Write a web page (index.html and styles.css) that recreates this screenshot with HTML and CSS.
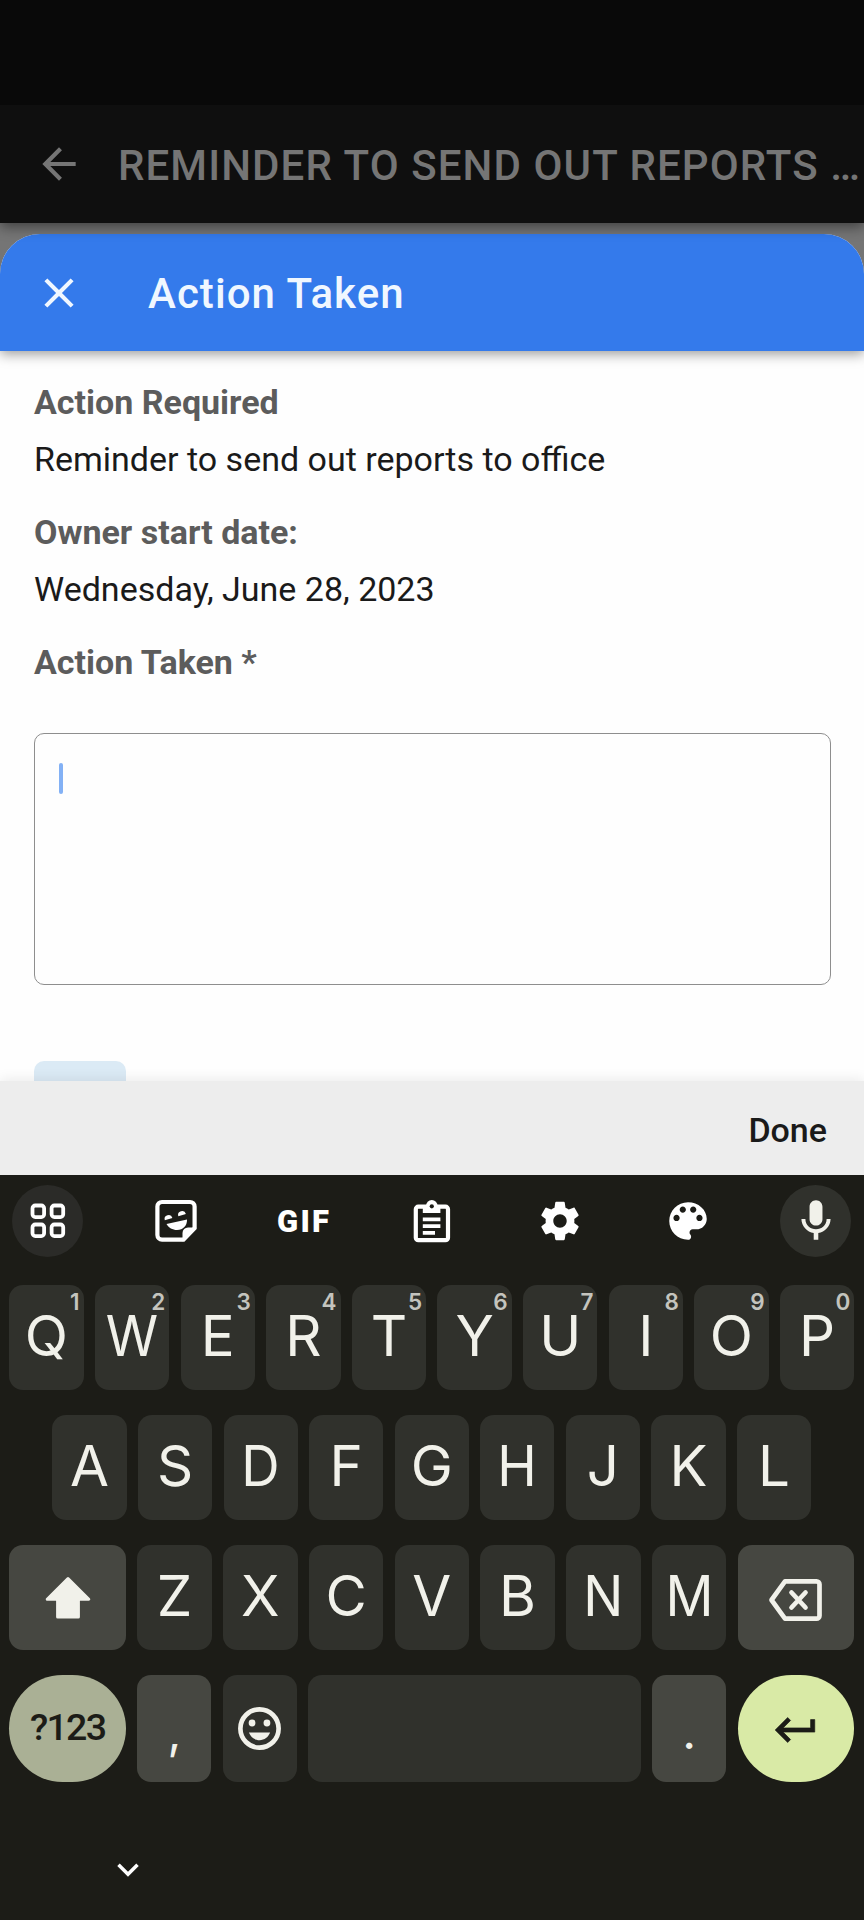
FILE: index.html
```html
<!DOCTYPE html>
<html lang="en">
<head>
<meta charset="utf-8">
<title>Action Taken</title>
<link rel="stylesheet" href="styles.css">
</head>
<body>
<div class="screen">
  <div class="statusbar"></div>
  <header class="appbar">
    <svg class="ic" viewBox="0 0 24 24"><path d="M20 11H7.83l5.59-5.59L12 4l-8 8 8 8 1.41-1.41L7.83 13H20v-2z"/></svg>
    <div class="appbar-title">REMINDER TO SEND OUT REPORTS …</div>
  </header>
  <div class="backdrop">
    <section class="sheet">
      <header class="sheet-header">
        <svg class="ic" viewBox="0 0 24 24"><path d="M19 6.41L17.59 5 12 10.59 6.41 5 5 6.41 10.59 12 5 17.59 6.41 19 12 13.41 17.59 19 19 17.59 13.41 12z"/></svg>
        <h1 class="sheet-title">Action Taken</h1>
      </header>
      <div class="sheet-body">
        <div class="label">Action Required</div>
        <div class="value">Reminder to send out reports to office</div>
        <div class="label">Owner start date:</div>
        <div class="value">Wednesday, June 28, 2023</div>
        <div class="label">Action Taken *</div>
        <div class="textbox"><span class="caret"></span></div>
        <div class="chip"></div>
      </div>
    </section>
  </div>
  <div class="accessory"><span class="done">Done</span></div>
  <div class="keyboard">
    <div class="tools">
      <div class="tool round"><svg width="36" height="36" viewBox="0 0 36 36" fill="none" stroke="#fff" stroke-width="3.8"><rect x="2.5" y="2.5" width="11.6" height="11.6" rx="2.8"/><rect x="21.6" y="2.5" width="11.6" height="11.6" rx="2.8"/><rect x="2.5" y="21.5" width="11.6" height="11.6" rx="2.8"/><rect x="21.6" y="21.5" width="11.6" height="11.6" rx="2.8"/></svg></div>
      <div class="tool"><svg width="44" height="44" viewBox="0 0 44 44"><path d="M8 3h28a4.600 4.600 0 0 1 4.600 4.600v21.500L29.500 40.600H8a4.600 4.600 0 0 1-4.600-4.600V7.600A4.600 4.600 0 0 1 8 3z" fill="none" stroke="#fff" stroke-width="4.200"/><path d="M42.500 28.500h-8.500a5.500 5.500 0 0 0-5.500 5.500v8.500z" fill="#fff"/><path d="M10.800 21.300a3.900 3.900 0 1 1 7.600-2.300z M24.300 17.300a3.900 3.900 0 1 1 7.600-2.300z" fill="#fff"/><path d="M12.500 25 33 20.500c.3 6-4 10.500-9.900 10.500-4.600 0-8.600-2.200-10.600-6z" fill="#fff"/></svg></div>
      <div class="tool gif">GIF</div>
      <div class="tool"><svg width="44" height="44" viewBox="0 0 44 44"><rect x="5.800" y="7.700" width="32.200" height="33.500" rx="2.500" fill="none" stroke="#fff" stroke-width="4.200"/><circle cx="21.800" cy="6.800" r="5.800" fill="#fff"/><rect x="12.800" y="6" width="17.600" height="8" fill="#fff"/><circle cx="21.800" cy="7.300" r="2.100" fill="#1c1c17"/><path d="M12.800 20.300h17.600M12.800 27.100h17.600M12.800 33.900h12.200" stroke="#fff" stroke-width="3.700"/></svg></div>
      <div class="tool"><svg width="46" height="46" viewBox="0 0 24 24" fill="#fff"><path d="M19.430 12.980c.04-.32.07-.64.07-.98s-.03-.66-.07-.98l2.110-1.650c.19-.15.24-.42.12-.64l-2-3.460c-.12-.22-.39-.3-.61-.22l-2.490 1c-.52-.4-1.080-.73-1.690-.98l-.38-2.650C14.460 2.180 14.250 2 14 2h-4c-.25 0-.46.18-.49.42l-.38 2.650c-.61.25-1.170.59-1.690.98l-2.490-1c-.23-.09-.49 0-.61.22l-2 3.460c-.13.22-.07.49.12.64l2.110 1.650c-.04.32-.07.65-.07.98s.03.66.07.98l-2.110 1.650c-.19.15-.24.42-.12.64l2 3.460c.12.22.39.3.61.22l2.490-1c.52.4 1.080.73 1.690.98l.38 2.650c.03.24.24.42.49.42h4c.25 0 .46-.18.49-.42l.38-2.650c.61-.25 1.170-.59 1.690-.98l2.490 1c.23.09.49 0 .61-.22l2-3.460c.12-.22.07-.49-.12-.64l-2.110-1.650zM12 15.500c-1.930 0-3.500-1.570-3.500-3.500s1.570-3.500 3.500-3.500 3.500 1.570 3.500 3.500-1.570 3.500-3.500 3.500z"/></svg></div>
      <div class="tool"><svg width="50" height="50" viewBox="0 0 24 24" fill="#fff"><path d="M12 3c-4.970 0-9 4.030-9 9s4.030 9 9 9c.83 0 1.500-.67 1.500-1.500 0-.39-.15-.74-.39-1.010-.23-.26-.38-.61-.38-.99 0-.83.67-1.500 1.500-1.500H16c2.760 0 5-2.240 5-5 0-4.420-4.030-8-9-8zm-5.500 9c-.83 0-1.500-.67-1.500-1.500S5.670 9 6.500 9 8 9.670 8 10.500 7.330 12 6.500 12zm3-4C8.670 8 8 7.330 8 6.500S8.670 5 9.500 5s1.500.67 1.500 1.500S10.330 8 9.500 8zm5 0c-.83 0-1.500-.67-1.500-1.500S13.670 5 14.500 5s1.500.67 1.500 1.500S15.330 8 14.500 8zm3 4c-.83 0-1.500-.67-1.500-1.500S16.670 9 17.500 9s1.500.67 1.500 1.500-.67 1.500-1.500 1.500z"/></svg></div>
      <div class="tool round mic"><svg width="50" height="50" viewBox="0 0 24 24" fill="#f1f1ea"><path d="M12 14.200c1.760 0 3.100-1.400 3.100-3.100V5.100c0-1.700-1.400-3.100-3.100-3.100S8.900 3.400 8.900 5.100v6c0 1.700 1.400 3.100 3.100 3.100zm5.100-3.200c0 3-2.440 4.900-5.100 4.900S6.900 14 6.900 11H5c0 3.410 2.720 6.230 5.900 6.720V21h2.200v-3.280c3.180-.48 5.900-3.300 5.900-6.720h-1.900z"/></svg></div>
    </div>
    <div class="keys">
      <div class="row">
        <div class="key">Q<i>1</i></div><div class="key"><b>W</b><i>2</i></div><div class="key">E<i>3</i></div><div class="key">R<i>4</i></div><div class="key">T<i>5</i></div><div class="key">Y<i>6</i></div><div class="key">U<i>7</i></div><div class="key">I<i>8</i></div><div class="key">O<i>9</i></div><div class="key">P<i>0</i></div>
      </div>
      <div class="row inset">
        <div class="key">A</div><div class="key">S</div><div class="key"><b>D</b></div><div class="key">F</div><div class="key">G</div><div class="key"><b>H</b></div><div class="key">J</div><div class="key">K</div><div class="key">L</div>
      </div>
      <div class="row">
        <div class="key wide alt shift"><svg width="48" height="48" viewBox="0 0 48 48" fill="#f1f1ea" stroke="#f1f1ea" stroke-width="3" stroke-linejoin="round"><path d="M24 4.500 44.800 25.300H34.400V43H13.600V25.300H3.200z"/></svg></div>
        <div class="key">Z</div><div class="key">X</div><div class="key">C</div><div class="key">V</div><div class="key">B</div><div class="key"><b>N</b></div><div class="key"><b>M</b></div>
        <div class="key wide alt"><svg width="56" height="48" viewBox="0 0 56 48" fill="none" stroke="#f1f1ea" stroke-width="4.700" stroke-linejoin="round"><path d="M17 5.300h31.500a3 3 0 0 1 3 3v31.400a3 3 0 0 1-3 3H17L3.500 24z"/><path d="M23.500 16.500l14 15M37.500 16.500l-14 15" stroke-linecap="round"/></svg></div>
      </div>
      <div class="row last">
        <div class="key wide sym"><span>?123</span></div>
        <div class="key alt punct"><span>,</span></div>
        <div class="key"><svg width="51" height="51" viewBox="0 0 24 24"><circle cx="12" cy="12" r="9" fill="none" stroke="#f1f1ea" stroke-width="2.200"/><circle cx="8.500" cy="9.400" r="1.600" fill="#f1f1ea"/><circle cx="15.500" cy="9.400" r="1.600" fill="#f1f1ea"/><path d="M7 13.900h10c-.8 2.100-2.700 3.600-5 3.600s-4.200-1.500-5-3.600z" fill="#f1f1ea"/></svg></div>
        <div class="key space"></div>
        <div class="key alt punct"><span>.</span></div>
        <div class="key wide enter"><svg width="50" height="50" viewBox="0 0 24 24" fill="#1c1c17" stroke="#1c1c17" stroke-width=".3"><path d="M19 7v4H5.830l3.580-3.590L8 6l-6 6 6 6 1.410-1.410L5.830 13H21V7h-2z"/></svg></div>
      </div>
    </div>
    <div class="navbar"><svg width="24" height="16" viewBox="0 0 24 16" fill="none" stroke="#fff" stroke-width="3.500"><path d="M2.500 2.800 12 12.300 21.500 2.800"/></svg></div>
  </div>
</div>
</body>
</html>
```
FILE: styles.css
```css
* { box-sizing: border-box; }
body { margin: 0; background: #1c1c17; font-family: Roboto, sans-serif; }
svg { display: block; flex: none; }
.screen { width: 864px; height: 1920px; display: flex; flex-direction: column; overflow: hidden; }
.statusbar { height: 105px; background: #090909; flex: none; position: relative; z-index: 2; }
.appbar { height: 118px; flex: none; background: #0f0f0f; display: flex; align-items: center; padding-left: 34px; color: #757575; box-shadow: 0 4px 12px rgba(0,0,0,.45); z-index: 1; }
.ic { width: 50px; height: 50px; fill: currentColor; }
.appbar-title { margin-left: 34px; font-size: 42px; font-weight: 500; letter-spacing: 1.100px; white-space: nowrap; line-height: 50px; padding-top: 4px; }
.backdrop { height: 858px; flex: none; background: #757575; padding-top: 11px; overflow: hidden; }
.sheet { height: 847px; border-radius: 40px 40px 0 0; background: #fefefe; overflow: hidden; }
.sheet-header { height: 117px; background: #347aeb; display: flex; align-items: center; padding-left: 34px; color: #f0f7ff; box-shadow: 0 3px 12px rgba(0,0,0,.4); }
.sheet-title { margin: 3px 0 0 64px; font-size: 42px; font-weight: 500; letter-spacing: 1.050px; line-height: 50px; }
.sheet-body { padding: 31px 34px 0; display: flex; flex-direction: column; }
.label, .value { font-size: 34px; line-height: 40px; white-space: nowrap; }
.label { font-weight: 700; color: #5c5c5c; margin-bottom: 17px; }
.value { color: #1a1a1a; margin-bottom: 33px; }
.textbox { height: 252px; margin: 34px -.5px 0; border: 1px solid #8e8e8e; border-radius: 10px; padding: 29px 24px; }
.caret { display: block; width: 4.500px; height: 31px; border-radius: 2px; background: #83b1f5; }
.chip { width: 92px; height: 40px; margin-top: 76px; border-radius: 10px; background: #dbeaf5; flex: none; }
.accessory { height: 94px; flex: none; background: #ededed; z-index: 1; box-shadow: 0 -2px 12px rgba(0,0,0,.08); display: flex; align-items: center; justify-content: flex-end; padding-right: 37px; }
.done { font-size: 34px; font-weight: 500; color: #1a1a1a; line-height: 40px; padding-top: 4px; }
.keyboard { height: 745px; flex: none; background: #1c1c17; display: flex; flex-direction: column; position: relative; z-index: 2; }
.tools { height: 72px; margin: 10px 12.500px 0 12px; display: flex; justify-content: space-between; align-items: center; }
.tool { width: 71px; height: 72px; display: flex; align-items: center; justify-content: center; }
.round { border-radius: 50%; background: #2b2b28; }
.mic { background: #30312c; }
.gif { font: 900 31px/40px Roboto, sans-serif; color: #fff; letter-spacing: 2.300px; padding: 2px 0 0 1px; }
.keys { padding: 28px 9.700px 0 9.300px; display: flex; flex-direction: column; gap: 24.700px; }
.row { display: flex; gap: 11.300px; height: 105.300px; }
.inset { padding: 0 43.200px; }
.key { position: relative; flex: 1 1 0; min-width: 0; display: flex; align-items: center; justify-content: center; border-radius: 14px; background: #30312c; color: #f1f1ea; font: 400 56.500px/70px Inter, sans-serif; padding-bottom: 3px; }
.key b { font-weight: 400; transform: scaleX(.94); }
.key i { position: absolute; top: 3px; right: 4px; font: 600 22.500px/28px Inter, sans-serif; color: #c4c4be; }
.wide { flex: 0 0 116.700px; }
.alt { background: #464741; }
.wide.alt { padding: 4px 0 0; }
.wide.shift { padding-top: 1px; }
.last .key { padding-bottom: 0; }
.last { height: 107px; }
.last .key:not(.wide):not(.space) { flex: 0 0 74.200px; }
.last .wide { border-radius: 53.500px; }
.sym { background: #aab095; color: #1c1c17; }
.sym span { font: 500 37.500px/44px Roboto, sans-serif; padding-bottom: 2px; letter-spacing: -1.700px; }
.punct span { font: 400 48px/50px Inter, sans-serif; padding-top: 8px; }
.enter { background: #d9eaa6; }
.last .enter { padding-top: 4px; }
.navbar { padding: 80px 0 0 116px; }
```
